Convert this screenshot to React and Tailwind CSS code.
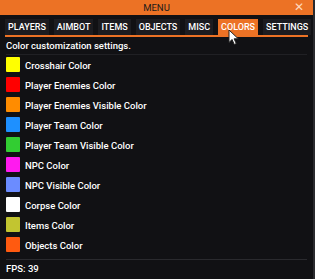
import React from "react";

const tabs = ["PLAYERS", "AIMBOT", "ITEMS", "OBJECTS", "MISC", "COLORS", "SETTINGS"];

const colors = [
  { name: "Crosshair Color", color: "#ffff00" },
  { name: "Player Enemies Color", color: "#ff0000" },
  { name: "Player Enemies Visible Color", color: "#ff8c00" },
  { name: "Player Team Color", color: "#1e90ff" },
  { name: "Player Team Visible Color", color: "#32cd32" },
  { name: "NPC Color", color: "#ff1aef" },
  { name: "NPC Visible Color", color: "#6b8cff" },
  { name: "Corpse Color", color: "#ffffff" },
  { name: "Items Color", color: "#c2c530" },
  { name: "Objects Color", color: "#ff5a10" },
];

const App = () => {
  return (
    <div
      className="relative w-[315px] h-[279px] bg-[#111114] overflow-hidden border-r-2 border-[#2a2a2e] flex flex-col"
      style={{ fontFamily: "Roboto, 'Liberation Sans', sans-serif" }}
    >
      <div className="relative h-[15px] bg-[#ec7225] flex items-center justify-center shrink-0">
        <span className="text-[9.5px] leading-none text-[#1b1b1b]">MENU</span>
        <span className="absolute right-[9px] top-[1px] text-[12px] leading-none text-[#ffd9bf]">✕</span>
      </div>

      <div className="mx-[5px] mt-[4px] flex gap-[5px] border-b-2 border-[#ec7225]">
        {tabs.map((t) => (
          <div
            key={t}
            className={
              "h-[16px] px-[3px] flex items-center text-[9px] font-medium leading-none " +
              (t === "COLORS" ? "bg-[#ec7225] text-white" : "bg-[#1c1c20] text-white")
            }
          >
            {t}
          </div>
        ))}
      </div>

      <div className="mx-[6px] mt-[3px] pb-[2px] border-b border-[#202024] text-[9.5px] font-medium text-white leading-[12px]">
        Color customization settings.
      </div>

      <div className="mx-[6px] mt-[2px] flex flex-col gap-[5px]">
        {colors.map((c) => (
          <div key={c.name} className="flex items-center gap-[5px] h-[15px]">
            <div className="w-[14px] h-[15px] rounded-[1px]" style={{ backgroundColor: c.color }} />
            <span className="text-[9.5px] font-medium text-white leading-none mt-[3px]">{c.name}</span>
          </div>
        ))}
      </div>

      <div className="mx-[6px] mt-[7px] pt-[3px] border-t border-[#2a2a2e] text-[9.5px] font-medium text-white leading-[12px]">
        FPS: 39
      </div>

      <svg className="absolute left-[228px] top-[29px]" width="13" height="17" viewBox="0 0 13 17">
        <path d="M1 1 L1 13.5 L4 10.5 L6.3 15.5 L8.3 14.6 L6.1 9.8 L10.3 9.8 Z" fill="#fff" stroke="#222" strokeWidth="1" />
      </svg>
    </div>
  );
};

export default App;
